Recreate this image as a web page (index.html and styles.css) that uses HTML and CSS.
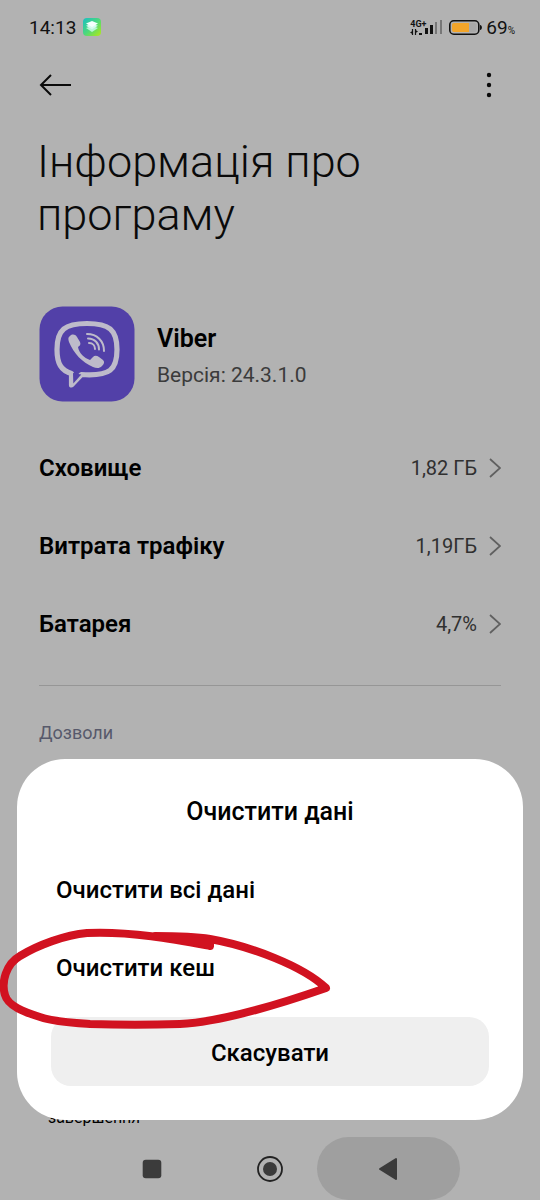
FILE: index.html
```html
<!DOCTYPE html>
<html lang="uk">
<head>
<meta charset="utf-8">
<meta name="viewport" content="width=device-width, initial-scale=1">
<title>Інформація про програму</title>
<link rel="stylesheet" href="styles.css">
</head>
<body>
<div class="screen">
  <header class="status">
    <span class="time">14:13</span>
    <svg class="status-app" width="18" height="18" viewBox="0 0 18 18" aria-hidden="true">
      <defs><linearGradient id="g" x1="0" y1="0" x2="1" y2="1"><stop offset="0" stop-color="#19bfc4"/><stop offset=".5" stop-color="#4cd87c"/><stop offset="1" stop-color="#b5ea13"/></linearGradient></defs>
      <rect width="18" height="18" rx="4" fill="url(#g)"/>
      <path d="M3 10l6-2 6 2-6 4z" fill="#b9f5d5"/>
      <path d="M3 7.800l6-2 6 2-6 3.500z" fill="#d7faf0"/>
      <path d="M3 5.500l6-2.500 6 2.500-6 3.500z" fill="#f4fffd"/>
    </svg>
    <span class="spacer"></span>
    <div class="network">
      <span class="network-type">4G+</span>
      <svg width="12" height="7" viewBox="0 0 12 7" aria-hidden="true"><path d="M2.500 0v6M5.500 0v6" stroke="#111" stroke-width="1.200"/><path d="M0 3.500L2.500 2v3zM8 2.500L5.500 1v3zM9 4h3v2H9z" fill="#111"/></svg>
    </div>
    <svg class="bars" width="20" height="16" viewBox="0 0 20 16" aria-hidden="true"><path d="M3 9h3v6H3zM8 6h3v9H8z" fill="#111"/><path d="M13 3h2v12h-2zM18 1h2v14h-2z" fill="#777"/></svg>
    <svg class="battery" width="33" height="15" viewBox="0 0 33 15" aria-hidden="true"><rect x=".8" y=".8" width="29" height="13.400" rx="4" fill="none" stroke="#111" stroke-width="1.600"/><rect x="3" y="3" width="24.500" height="9" rx="2" fill="#a9a9a9"/><path d="M5 3h15v9H5a2 2 0 0 1-2-2V5a2 2 0 0 1 2-2z" fill="#f3a52a"/><path d="M31 5c2.500 0 2.500 5 0 5z" fill="#111"/></svg>
    <span class="percent">69<small>%</small></span>
  </header>
  <nav class="toolbar">
    <button class="icon-button" aria-label="Назад"><svg width="32" height="24" viewBox="0 0 32 24"><path d="M12 2L2 12l10 10M2 12h30" fill="none" stroke="#0b0b0b" stroke-width="2"/></svg></button>
    <button class="icon-button" aria-label="Більше"><svg width="24" height="28" viewBox="0 0 24 28"><g fill="#0b0b0b"><circle cx="12" cy="4" r="2.200"/><circle cx="12" cy="14" r="2.200"/><circle cx="12" cy="24" r="2.200"/></g></svg></button>
  </nav>
  <main class="content">
    <h1>Інформація про програму</h1>
    <section class="app">
      <svg class="logo" width="96" height="96" viewBox="0 0 96 96" aria-hidden="true">
        <rect x=".5" y=".5" width="95" height="95" rx="23" fill="#5240a8"/>
        <path d="M48 17.500c-22 0-30 6-30 26 0 14 4 21 14.500 24v11.500l10-10.500c29 2 35.500-5 35.500-25 0-20-8-26-30-26z" fill="none" stroke="#bebbca" stroke-width="5.200" stroke-linejoin="round"/>
        <path d="M34 67l.300 10.500 8-9z" fill="#5240a8"/>
        <path d="M31 30c2-2 5-2 7 1l3 5c1 2 0 4-2 5 1 6 6 11 12 13l3-3c2-2 4-1 6 0l4 3c2 2 1 4-1 6-3 3-6 2-9 1-11-5-19-13-24-25-1-3-1-5 1-6z" fill="#bebbca"/>
        <path d="M48 28c10 0 17 7 17 17M49 32.500c7 0 11 5 11 11M50 37c4 0 6 3 6 6" fill="none" stroke="#bebbca" stroke-width="2" stroke-linecap="round"/>
      </svg>
      <div class="app-text">
        <h2>Viber</h2>
        <p class="version">Версія: 24.3.1.0</p>
      </div>
    </section>
    <div class="rows">
      <button class="row"><span class="name">Сховище</span><span class="value">1,82 ГБ</span><svg width="12" height="20" viewBox="0 0 12 20"><path d="M1 1l10 9-10 9" fill="none" stroke="#606060" stroke-width="1.700"/></svg></button>
      <button class="row"><span class="name">Витрата трафіку</span><span class="value">1,19ГБ</span><svg width="12" height="20" viewBox="0 0 12 20"><path d="M1 1l10 9-10 9" fill="none" stroke="#606060" stroke-width="1.700"/></svg></button>
      <button class="row"><span class="name">Батарея</span><span class="value">4,7%</span><svg width="12" height="20" viewBox="0 0 12 20"><path d="M1 1l10 9-10 9" fill="none" stroke="#606060" stroke-width="1.700"/></svg></button>
    </div>
    <h3>Дозволи</h3>
  </main>
  <p class="finish">завершення</p>
  <footer class="keys">
    <button class="key" aria-label="Останні програми"><svg width="20" height="20" viewBox="0 0 20 20"><rect x=".7" y=".7" width="18.600" height="18.600" rx="3" fill="#3b3b3b"/></svg></button>
    <button class="key" aria-label="Головний екран"><svg width="26" height="26" viewBox="0 0 26 26"><circle cx="13" cy="13" r="12" fill="none" stroke="#222" stroke-width="1.800"/><circle cx="13" cy="13" r="7" fill="#3b3b3b"/></svg></button>
    <button class="key pressed" aria-label="Назад"><svg width="20" height="24" viewBox="0 0 20 24"><path d="M18 2v20L2 12z" fill="#3b3b3b" stroke="#3b3b3b" stroke-width="2" stroke-linejoin="round"/></svg></button>
  </footer>
  <div class="dialog" role="dialog" aria-labelledby="dialog-title">
    <h2 id="dialog-title" class="dialog-title">Очистити дані</h2>
    <button class="option">Очистити всі дані</button>
    <button class="option">Очистити кеш</button>
    <button class="cancel">Скасувати</button>
    <svg class="mark" width="334" height="100" viewBox="0 0 334 100" aria-hidden="true">
      <path d="M210 18C178 12 132 3 87 5C65 7 38 17 20 28C6 36 1 54 5 67C8 78 24 84 40 89C55 94 75 95 90 96C120 97 150 97 180 96C222 94 280 76 326 60C303 38 250 18 210 11C192 8 172 8 155 8" fill="none" stroke="#d11220" stroke-width="8" stroke-linecap="round" stroke-linejoin="round"/>
      <path d="M150 5l64 6v7l-4 3-60-12z" fill="#d11220"/>
    </svg>
  </div>
</div>
</body>
</html>
```
FILE: styles.css
```css
* { box-sizing: border-box; }
body { margin: 0; background: #b2b2b2; color: #000; font-family: Roboto, "Noto Sans", sans-serif; }
h1, h2, h3, p { margin: 0; }
button { padding: 0; border: 0; background: none; color: inherit; font: inherit; cursor: pointer; }
svg { display: block; flex: none; }
.screen { position: relative; display: flex; flex-direction: column; min-height: 100vh; overflow: hidden; }

.status { display: flex; align-items: center; height: 54px; padding: 0 25px 0 29px; color: #111; }
.time { font-size: 19px; }
.status-app { margin-left: 7px; }
.spacer { flex: 1; }
.network { display: flex; flex-direction: column; width: 16px; }
.network-type { font-size: 9px; line-height: 10px; font-weight: 700; }
.bars { margin-left: -4px; }
.battery { margin: 0 4px 0 7px; }
.percent { font-size: 19px; }
.percent small { font-size: 10px; }

.toolbar { display: flex; justify-content: space-between; align-items: center; height: 62px; padding: 0 39px; }

.content { padding: 19px 39px 0; }
h1 { font-size: 45px; line-height: 53px; font-weight: 300; color: #0a0a0a; margin-left: -2px; }
.app { display: flex; align-items: center; gap: 22px; margin-top: 65px; }
.app-text { padding-top: 5px; }
.app h2 { font-size: 25px; line-height: 36px; font-weight: 600; }
.version { font-size: 21px; line-height: 36px; color: #3b3b3b; }
.rows { padding: 27px 0 22px; border-bottom: 1px solid #969696; }
.row { display: flex; align-items: center; width: 100%; height: 78px; text-align: left; }
.name { flex: 1; font-size: 24px; font-weight: 600; }
.value { margin-right: 12px; font-size: 20px; color: #303030; }
h3 { margin-top: 35px; font-size: 18px; line-height: 24px; font-weight: 400; color: #57596b; }

.finish { margin-top: auto; padding-left: 48px; font-size: 16px; line-height: 18px; }
.keys { display: flex; justify-content: center; align-items: center; height: 73px; padding-top: 10px; }
.key { display: flex; justify-content: center; align-items: center; width: 118px; height: 63px; }
.key.pressed { width: 143px; margin: 0 -12px; border-radius: 32px; background: #9f9f9f; }

.dialog { position: absolute; left: 17px; right: 17px; bottom: 80px; display: flex; flex-direction: column; padding: 27px 34px 34px; border-radius: 48px; background: #fff; }
.dialog-title { margin-bottom: 13px; font-size: 25px; line-height: 52px; font-weight: 500; text-align: center; }
.option { height: 78px; padding-left: 5px; font-size: 24px; font-weight: 500; text-align: left; }
.cancel { height: 69px; margin-top: 10px; padding-top: 2px; border-radius: 20px; background: #efefef; font-size: 24px; font-weight: 500; }
.mark { position: absolute; left: -17px; top: 169px; overflow: visible; pointer-events: none; }
```
